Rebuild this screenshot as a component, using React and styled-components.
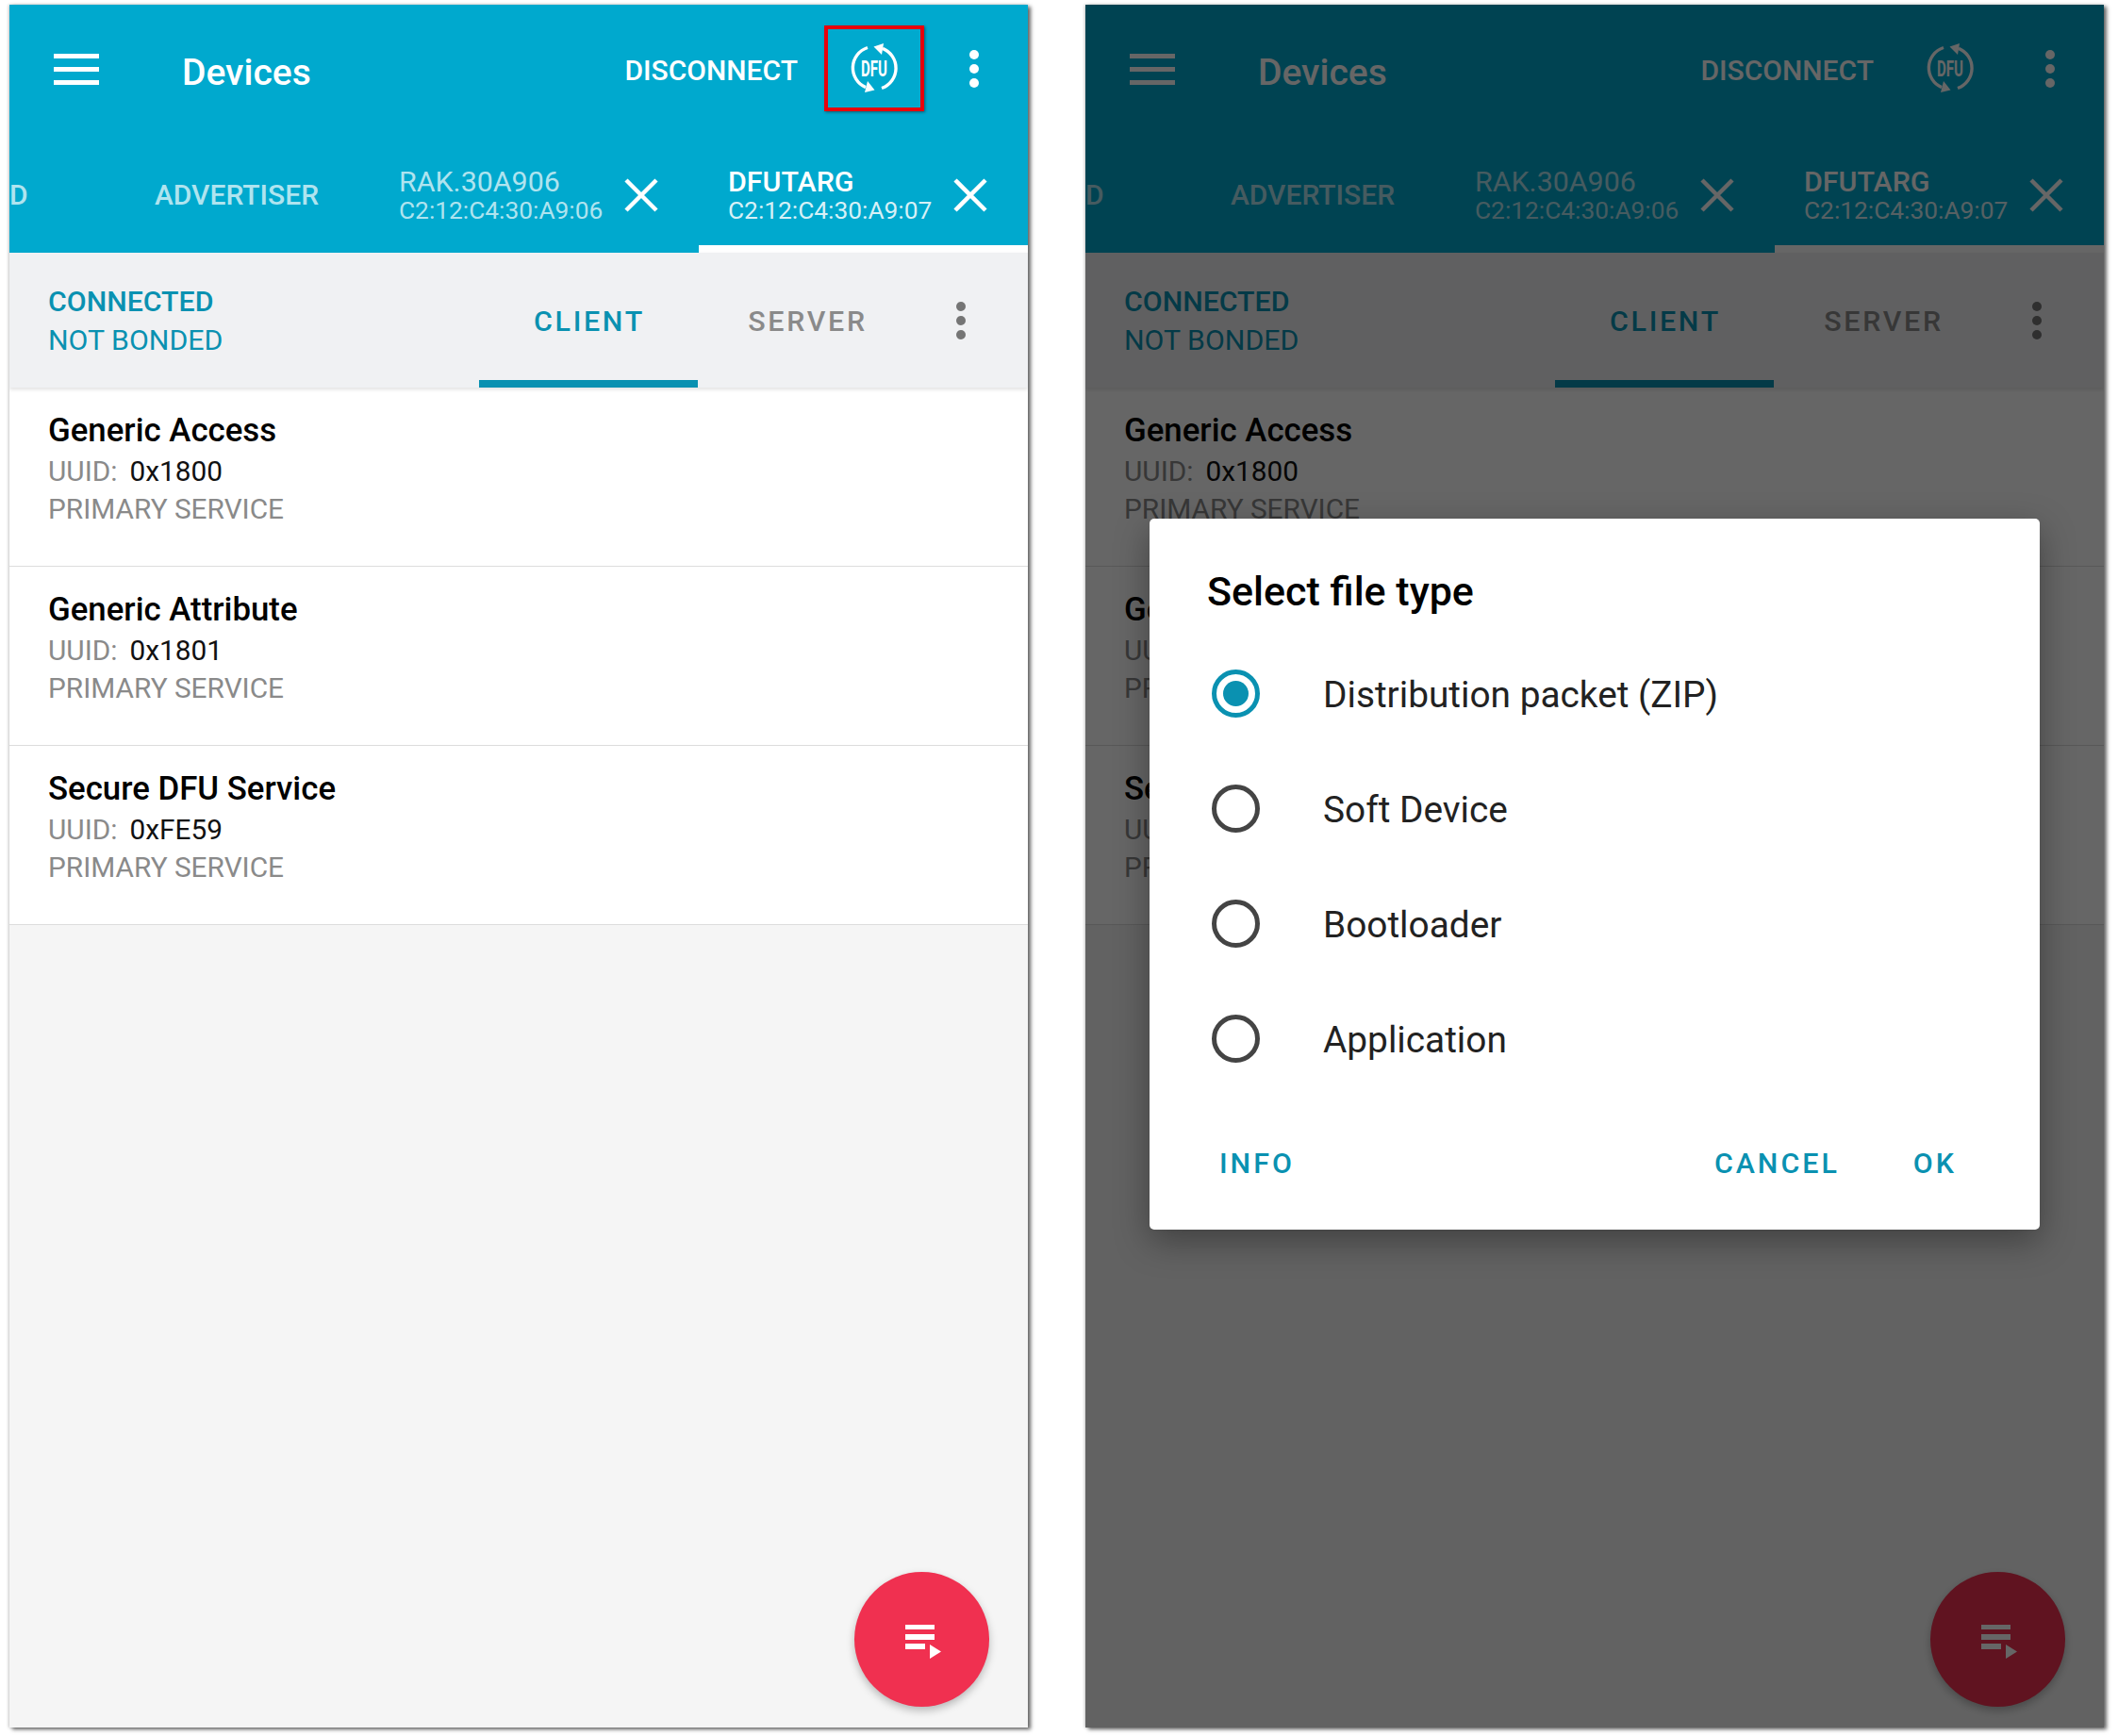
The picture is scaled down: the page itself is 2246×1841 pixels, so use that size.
import React from 'react'
import styled, { createGlobalStyle } from 'styled-components'

const TEAL = '#0a91b1'

const services = [
	{ name: 'Generic Access', uuid: '0x1800' },
	{ name: 'Generic Attribute', uuid: '0x1801' },
	{ name: 'Secure DFU Service', uuid: '0xFE59' },
]

const fileTypes = ['Distribution packet (ZIP)', 'Soft Device', 'Bootloader', 'Application']

const GlobalStyle = createGlobalStyle`
	html, body {
		margin: 0;
		background: #fff;
		overflow: hidden;
	}
	* {
		box-sizing: border-box;
	}
`

const Page = styled.div`
	display: flex;
	gap: 61px;
	width: 2246px;
	height: 1841px;
	padding: 5px 0 0 10px;
	font-family: Roboto, 'Liberation Sans', sans-serif;
`

const ScreenFrame = styled.div`
	position: relative;
	isolation: isolate;
	width: 1080px;
	height: 1827px;
	box-shadow: 3px 2px 4px rgba(0, 0, 0, 0.6), -1px 0 3px rgba(0, 0, 0, 0.2);
`

const Screen = styled.div`
	position: relative;
	display: flex;
	flex-direction: column;
	height: 100%;
	overflow: hidden;
	background: #f5f5f5;
`

const AppBar = styled.header`
	background: #00a9ce;
	color: #fff;
`

const TopRow = styled.div`
	display: flex;
	align-items: center;
	height: 140px;
	padding: 0 52px 4px 47px;
`

const Burger = styled.div`
	display: flex;
	flex-direction: column;
	gap: 9px;
	width: 48px;

	span {
		height: 5px;
		background: #fff;
	}
`

const Title = styled.h1`
	flex: 1;
	margin: 8px 0 0 88px;
	font-size: 39px;
	font-weight: 500;
`

const ActionText = styled.span`
	margin-top: 2px;
	font-size: 30px;
	font-weight: 500;
`

const DfuBox = styled.div`
	display: flex;
	align-items: center;
	justify-content: center;
	width: 106px;
	height: 91px;
	margin: -2px 0 0 28px;
	border: 4px solid ${(p) => (p.$marked ? '#e8000b' : 'transparent')};
	box-shadow: ${(p) => (p.$marked ? '1px 1px 3px rgba(0, 0, 0, 0.45)' : 'none')};
`

const Kebab = styled.div`
	display: flex;
	flex-direction: column;
	gap: 5px;
	margin-left: ${(p) => p.$left}px;

	span {
		width: 10px;
		height: 10px;
		border-radius: 50%;
		background: ${(p) => p.$color};
	}
`

const TabStrip = styled.div`
	display: flex;
	height: 123px;
	overflow: hidden;
`

const DeviceTab = styled.div`
	display: flex;
	flex: none;
	align-items: center;
	width: ${(p) => p.$width}px;
	padding-left: ${(p) => p.$pad}px;
	justify-content: ${(p) => (p.$center ? 'center' : 'flex-start')};
	color: rgba(255, 255, 255, 0.7);
	box-shadow: ${(p) => (p.$active ? 'inset 0 -8px 0 #fff' : 'none')};
`

const TabLabel = styled.span`
	font-size: 30px;
	font-weight: 500;
`

const TabText = styled.div`
	flex: 1;
	padding-top: 2px;
`

const TabName = styled.div`
	font-size: 30.4px;
	font-weight: ${(p) => (p.$active ? 500 : 400)};
	line-height: 31px;
	color: ${(p) => (p.$active ? '#fff' : 'inherit')};
`

const TabAddress = styled.div`
	font-size: 26.3px;
	line-height: 31px;
	color: ${(p) => (p.$active ? 'rgba(255, 255, 255, 0.85)' : 'inherit')};
`

const CloseIcon = styled.svg`
	flex: none;
	width: 38px;
	height: 38px;
	margin-right: 42px;
`

const SubBar = styled.div`
	position: relative;
	z-index: 1;
	display: flex;
	align-items: center;
	height: 143px;
	background: #f0f1f3;
	box-shadow: 0 2px 4px rgba(0, 0, 0, 0.12);
`

const Status = styled.div`
	width: 498px;
	padding: 1px 0 0 41px;
	color: ${TEAL};
	font-size: 30.3px;
	line-height: 41px;
`

const StatusStrong = styled.div`
	font-weight: 500;
`

const ModeTab = styled.div`
	display: flex;
	align-items: center;
	justify-content: center;
	width: ${(p) => p.$width}px;
	height: 100%;
	padding: 2px 0 0 2px;
	font-size: 30.4px;
	font-weight: 500;
	letter-spacing: 2.7px;
	color: ${(p) => (p.$active ? TEAL : '#8a8a8a')};
	box-shadow: ${(p) => (p.$active ? `inset 0 -8px 0 ${TEAL}` : 'none')};
`

const ServiceList = styled.div`
	display: flex;
	flex-direction: column;
	background: #fff;
`

const ServiceRow = styled.div`
	height: 190px;
	padding: 24px 0 0 41px;
	border-bottom: 1px solid #ddd;
`

const ServiceName = styled.div`
	margin-bottom: 2px;
	font-size: 34.8px;
	font-weight: 500;
	line-height: 42px;
	color: #000;
`

const ServiceLine = styled.div`
	display: flex;
	font-size: 29.8px;
	line-height: 41px;
	color: #8a8a8a;

	& + & {
		margin-top: -1px;
	}
`

const UuidValue = styled.span`
	margin-left: 13px;
	color: #111;
`

const Fab = styled.div`
	position: absolute;
	right: 41px;
	bottom: 22px;
	display: flex;
	width: 143px;
	height: 143px;
	border-radius: 50%;
	background: #f03050;
	box-shadow: 0 4px 8px rgba(0, 0, 0, 0.25);
`

const Scrim = styled.div`
	position: absolute;
	inset: 0;
	z-index: 2;
	display: flex;
	align-items: flex-start;
	justify-content: center;
	padding-top: 545px;
	background: rgba(0, 0, 0, 0.6);
`

const Dialog = styled.div`
	width: 944px;
	height: 754px;
	border-radius: 5px;
	background: #fff;
	box-shadow: 0 12px 36px rgba(0, 0, 0, 0.35);
`

const DialogTitle = styled.h2`
	height: 124px;
	margin: 0;
	padding: 54px 0 0 61px;
	font-size: 43px;
	font-weight: 500;
	line-height: 46px;
	color: #000;
`

const OptionRow = styled.div`
	display: flex;
	align-items: center;
	height: 122px;
	padding-left: 66px;
`

const Radio = styled.span`
	display: flex;
	flex: none;
	align-items: center;
	justify-content: center;
	width: 51px;
	height: 51px;
	border: 5px solid ${(p) => (p.$checked ? TEAL : '#444')};
	border-radius: 50%;

	&::after {
		content: '';
		display: ${(p) => (p.$checked ? 'block' : 'none')};
		width: 27px;
		height: 27px;
		border-radius: 50%;
		background: ${TEAL};
	}
`

const OptionLabel = styled.span`
	margin: 3px 0 0 67px;
	font-size: 38.8px;
	color: #222;
`

const DialogActions = styled.div`
	display: flex;
	align-items: center;
	height: 142px;
	padding: 0 88px 0 74px;
	color: ${TEAL};
	font-size: 30.4px;
	font-weight: 500;
	letter-spacing: 3px;
`

const ActionSpacer = styled.span`
	flex: 1;
`

const OkLabel = styled.span`
	margin-left: 78px;
`

function DfuIcon() {
	return (
		<svg width="54" height="56" viewBox="-27 -28 54 56">
			<g fill="none" stroke="#fff" strokeWidth="3.4">
				<path d="M-7 -21.5A22.5 22.5 0 0 0 -9 20.6" />
				<path d="M8 21.5A22.5 22.5 0 0 0 9 -20.6" />
			</g>
			<path d="M0.5 23.5L-10 26L-7 14Z" fill="#fff" />
			<path d="M-0.5 -22.5L10 -26L8 -14Z" fill="#fff" />
			<text
				x="0"
				y="8.5"
				textAnchor="middle"
				textLength="28"
				lengthAdjust="spacingAndGlyphs"
				fontFamily="Roboto, sans-serif"
				fontWeight="700"
				fontSize="23"
				fill="#fff"
			>
				DFU
			</text>
		</svg>
	)
}

function QueueIcon() {
	return (
		<svg width="143" height="143" viewBox="0 0 143 143" fill="#fff">
			<rect x="54" y="56" width="31" height="5" />
			<rect x="54" y="66" width="31" height="6" />
			<rect x="54" y="76" width="21" height="6" />
			<path d="M80 77L92 84.5L80 92Z" />
		</svg>
	)
}

function Close() {
	return (
		<CloseIcon viewBox="0 0 38 38">
			<path d="M3 3L35 35M35 3L3 35" stroke="#fff" strokeWidth="4.5" fill="none" />
		</CloseIcon>
	)
}

function Dots({ color, left }) {
	return (
		<Kebab $color={color} $left={left}>
			<span />
			<span />
			<span />
		</Kebab>
	)
}

function DevicesScreen({ marked }) {
	return (
		<Screen>
			<AppBar>
				<TopRow>
					<Burger>
						<span />
						<span />
						<span />
					</Burger>
					<Title>Devices</Title>
					<ActionText>DISCONNECT</ActionText>
					<DfuBox $marked={marked}>
						<DfuIcon />
					</DfuBox>
					<Dots color="#fff" left={48} />
				</TopRow>
				<TabStrip>
					<DeviceTab $width={99} $pad={0}>
						<TabLabel>D</TabLabel>
					</DeviceTab>
					<DeviceTab $width={283} $pad={1} $center>
						<TabLabel>ADVERTISER</TabLabel>
					</DeviceTab>
					<DeviceTab $width={349} $pad={31}>
						<TabText>
							<TabName>RAK.30A906</TabName>
							<TabAddress>C2:12:C4:30:A9:06</TabAddress>
						</TabText>
						<Close />
					</DeviceTab>
					<DeviceTab $width={349} $pad={31} $active>
						<TabText>
							<TabName $active>DFUTARG</TabName>
							<TabAddress $active>C2:12:C4:30:A9:07</TabAddress>
						</TabText>
						<Close />
					</DeviceTab>
				</TabStrip>
			</AppBar>
			<SubBar>
				<Status>
					<StatusStrong>CONNECTED</StatusStrong>
					<div>NOT BONDED</div>
				</Status>
				<ModeTab $width={232} $active>
					CLIENT
				</ModeTab>
				<ModeTab $width={231}>SERVER</ModeTab>
				<Dots color="#757575" left={43} />
			</SubBar>
			<ServiceList>
				{services.map((s) => (
					<ServiceRow key={s.uuid}>
						<ServiceName>{s.name}</ServiceName>
						<ServiceLine>
							UUID:<UuidValue>{s.uuid}</UuidValue>
						</ServiceLine>
						<ServiceLine>PRIMARY SERVICE</ServiceLine>
					</ServiceRow>
				))}
			</ServiceList>
			<Fab>
				<QueueIcon />
			</Fab>
		</Screen>
	)
}

export default function App() {
	return (
		<Page>
			<GlobalStyle />
			<ScreenFrame>
				<DevicesScreen marked />
			</ScreenFrame>
			<ScreenFrame>
				<DevicesScreen />
				<Scrim>
					<Dialog>
						<DialogTitle>Select file type</DialogTitle>
						{fileTypes.map((type, i) => (
							<OptionRow key={type}>
								<Radio $checked={i === 0} />
								<OptionLabel>{type}</OptionLabel>
							</OptionRow>
						))}
						<DialogActions>
							<span>INFO</span>
							<ActionSpacer />
							<span>CANCEL</span>
							<OkLabel>OK</OkLabel>
						</DialogActions>
					</Dialog>
				</Scrim>
			</ScreenFrame>
		</Page>
	)
}
